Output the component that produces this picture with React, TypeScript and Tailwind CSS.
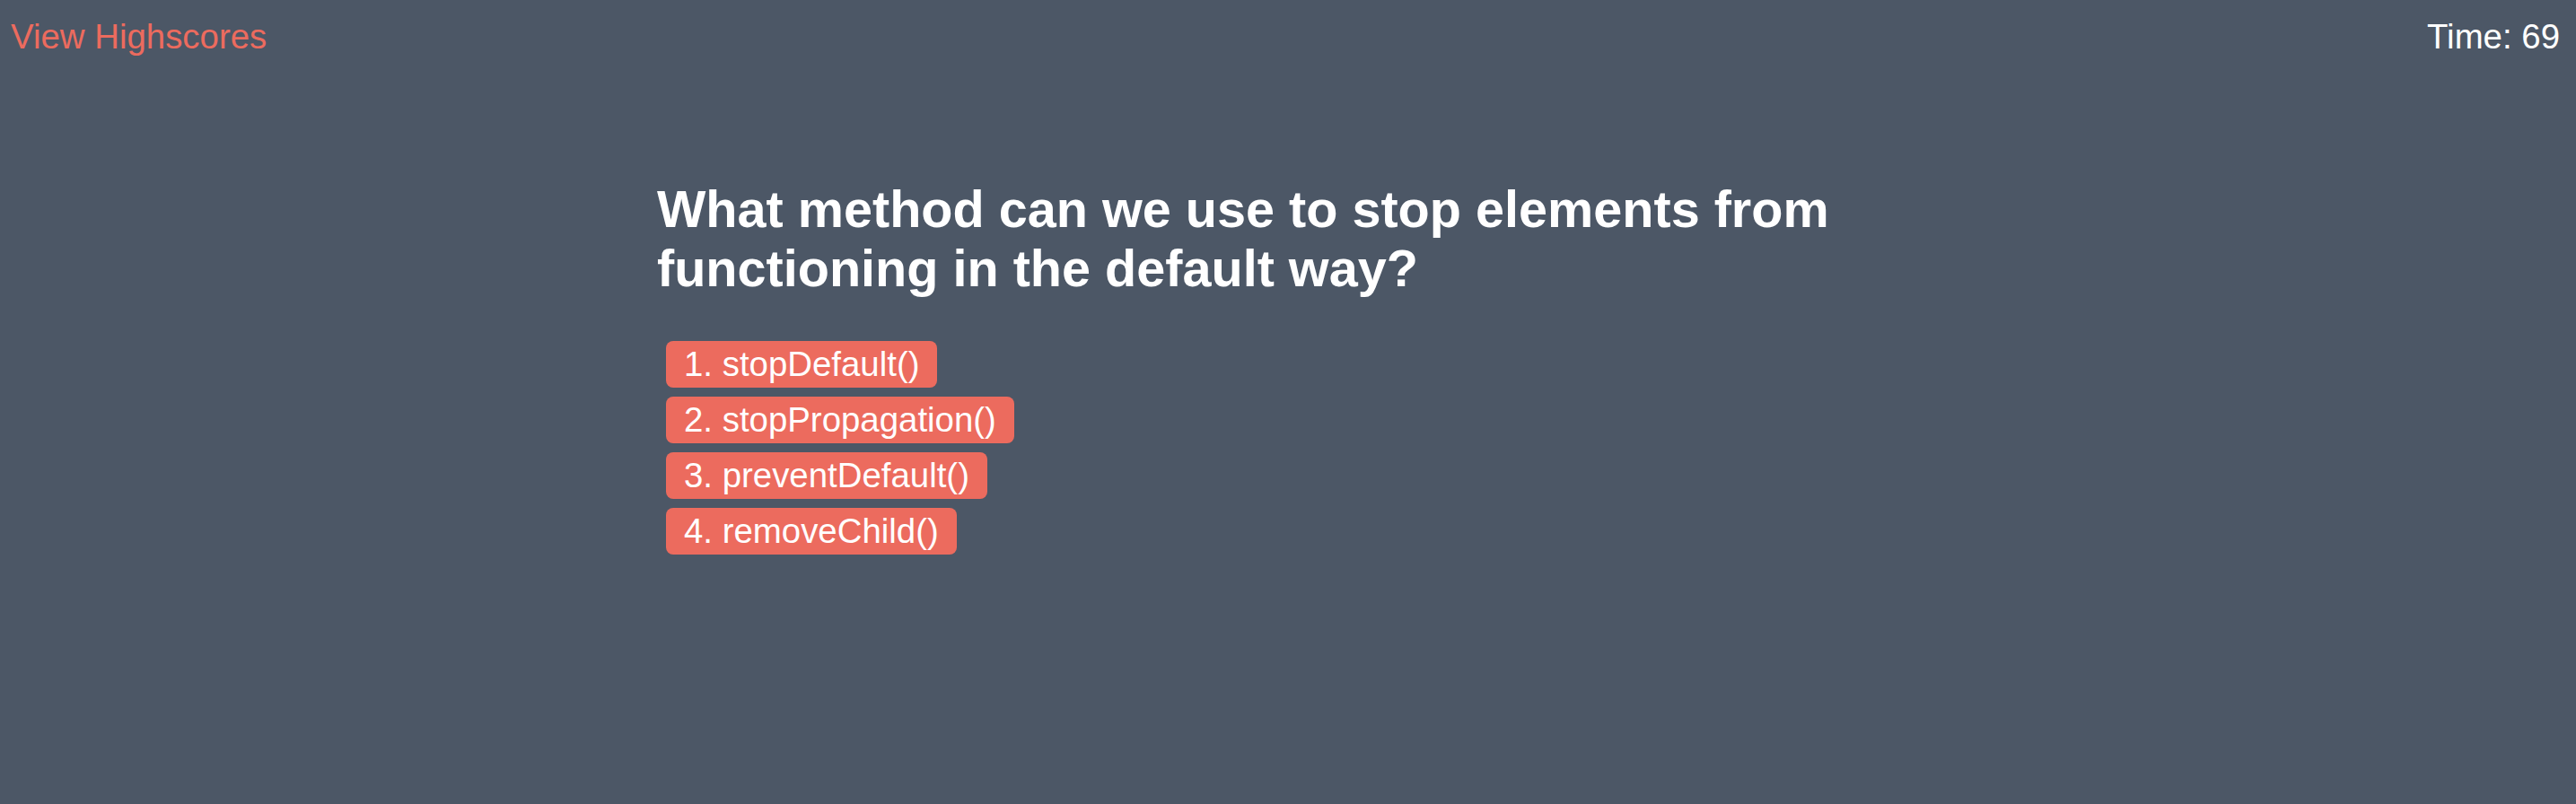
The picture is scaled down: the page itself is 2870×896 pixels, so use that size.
import React from "react";

const answers = ["1. stopDefault()", "2. stopPropagation()", "3. preventDefault()", "4. removeChild()"];

export default function App() {
  return (
    <div
      className="w-[2870px] h-[896px] bg-[#4c5766] overflow-hidden"
      style={{ fontFamily: '"Liberation Sans", Arial, sans-serif' }}
    >
      <header className="flex justify-between items-start pt-[19px] pl-[12px] pr-[18px]">
        <a className="text-[38.4px] leading-[44px] text-[#ec6b5e]">View Highscores</a>
        <div className="text-[38.4px] leading-[44px] text-white">Time: 69</div>
      </header>
      <main className="ml-[732px] mt-[137px] w-[1420px]">
        <h1 className="text-[57.6px] leading-[66px] font-bold text-white">
          What method can we use to stop elements from functioning in the default way?
        </h1>
        <div className="mt-[48px] flex flex-col items-start gap-[10px] pl-[10px]">
          {answers.map((a) => (
            <button
              key={a}
              className="h-[52px] bg-[#ec6b5e] text-white text-[38.4px] leading-[52px] px-[20px] rounded-[8px]"
              style={{ fontFamily: '"Liberation Sans", Arial, sans-serif' }}
            >
              {a}
            </button>
          ))}
        </div>
      </main>
    </div>
  );
}
